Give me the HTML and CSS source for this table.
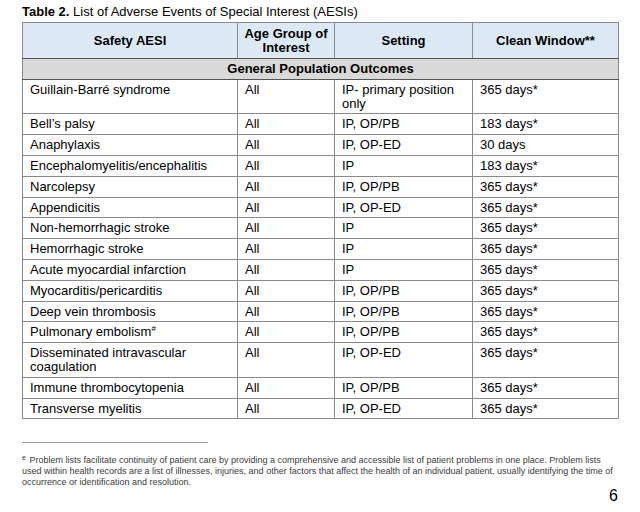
FILE: index.html
```html
<!DOCTYPE html>
<html>
<head>
<meta charset="utf-8">
<link rel="stylesheet" href="styles.css">
</head>
<body>
<div class="page">
  <div class="title"><b>Table 2.</b> List of Adverse Events of Special Interest (AESIs)</div>
  <table class="aesi">
    <colgroup>
      <col class="c1"><col class="c2"><col class="c3"><col class="c4">
    </colgroup>
    <thead>
      <tr class="head">
        <th>Safety AESI</th>
        <th>Age Group of Interest</th>
        <th>Setting</th>
        <th>Clean Window**</th>
      </tr>
    </thead>
    <tbody>
      <tr class="section"><td colspan="4">General Population Outcomes</td></tr>
      <tr><td>Guillain-Barré syndrome</td><td>All</td><td>IP- primary position only</td><td>365 days*</td></tr>
      <tr><td>Bell’s palsy</td><td>All</td><td>IP, OP/PB</td><td>183 days*</td></tr>
      <tr><td>Anaphylaxis</td><td>All</td><td>IP, OP-ED</td><td>30 days</td></tr>
      <tr><td>Encephalomyelitis/encephalitis</td><td>All</td><td>IP</td><td>183 days*</td></tr>
      <tr><td>Narcolepsy</td><td>All</td><td>IP, OP/PB</td><td>365 days*</td></tr>
      <tr><td>Appendicitis</td><td>All</td><td>IP, OP-ED</td><td>365 days*</td></tr>
      <tr><td>Non-hemorrhagic stroke</td><td>All</td><td>IP</td><td>365 days*</td></tr>
      <tr><td>Hemorrhagic stroke</td><td>All</td><td>IP</td><td>365 days*</td></tr>
      <tr><td>Acute myocardial infarction</td><td>All</td><td>IP</td><td>365 days*</td></tr>
      <tr><td>Myocarditis/pericarditis</td><td>All</td><td>IP, OP/PB</td><td>365 days*</td></tr>
      <tr><td>Deep vein thrombosis</td><td>All</td><td>IP, OP/PB</td><td>365 days*</td></tr>
      <tr><td>Pulmonary embolism<sup>#</sup></td><td>All</td><td>IP, OP/PB</td><td>365 days*</td></tr>
      <tr><td>Disseminated intravascular coagulation</td><td>All</td><td>IP, OP-ED</td><td>365 days*</td></tr>
      <tr><td>Immune thrombocytopenia</td><td>All</td><td>IP, OP/PB</td><td>365 days*</td></tr>
      <tr><td>Transverse myelitis</td><td>All</td><td>IP, OP-ED</td><td>365 days*</td></tr>
    </tbody>
  </table>
  <div class="rule"></div>
  <p class="footnote"><span class="mark">e</span> Problem lists facilitate continuity of patient care by providing a comprehensive and accessible list of patient problems in one place. Problem lists used within health records are a list of illnesses, injuries, and other factors that affect the health of an individual patient, usually identifying the time of occurrence or identification and resolution.</p>
  <div class="pagenum">6</div>
</div>
</body>
</html>
```
FILE: styles.css
```css
html, body {
  margin: 0;
  padding: 0;
  background: #ffffff;
}
.page {
  width: 596px;
  padding: 4px 22px 0 22px;
  font-family: "Liberation Sans", Arial, sans-serif;
  color: #000;
}
.title {
  font-size: 13px;
  line-height: 16px;
  margin-bottom: 2px;
}
.aesi {
  width: 596px;
  border-collapse: collapse;
  table-layout: fixed;
  font-size: 13px;
  line-height: 13.8px;
}
.c1 { width: 215px; }
.c2 { width: 97px; }
.c3 { width: 138px; }
.c4 { width: 146px; }
.aesi th, .aesi td {
  border: 1px solid #8a8a8a;
  padding: 3px 7px 3px 7px;
  vertical-align: top;
  text-align: left;
}
.head th {
  background: #dce9f5;
  font-weight: bold;
  text-align: center;
  vertical-align: middle;
  padding: 4px 2px 3px 2px;
  height: 28px;
  border-bottom: 1px solid #555;
}
.section td {
  background: #d9d9d9;
  font-weight: bold;
  text-align: center;
  border-bottom: 1px solid #555;
}
.aesi sup {
  font-size: 8px;
  line-height: 0;
  vertical-align: 5px;
}
.rule {
  width: 186px;
  height: 1px;
  background: #9a9a9a;
  margin-top: 23px;
}
.footnote {
  margin: 11px 0 0 0;
  font-size: 9px;
  line-height: 11px;
  color: #3a3a3a;
}
.footnote .mark {
  font-size: 7px;
  line-height: 7px;
  vertical-align: 3px;
  margin-right: 1px;
}
.pagenum {
  text-align: right;
  font-size: 16px;
  line-height: 18px;
  margin-top: -1px;
}
```
